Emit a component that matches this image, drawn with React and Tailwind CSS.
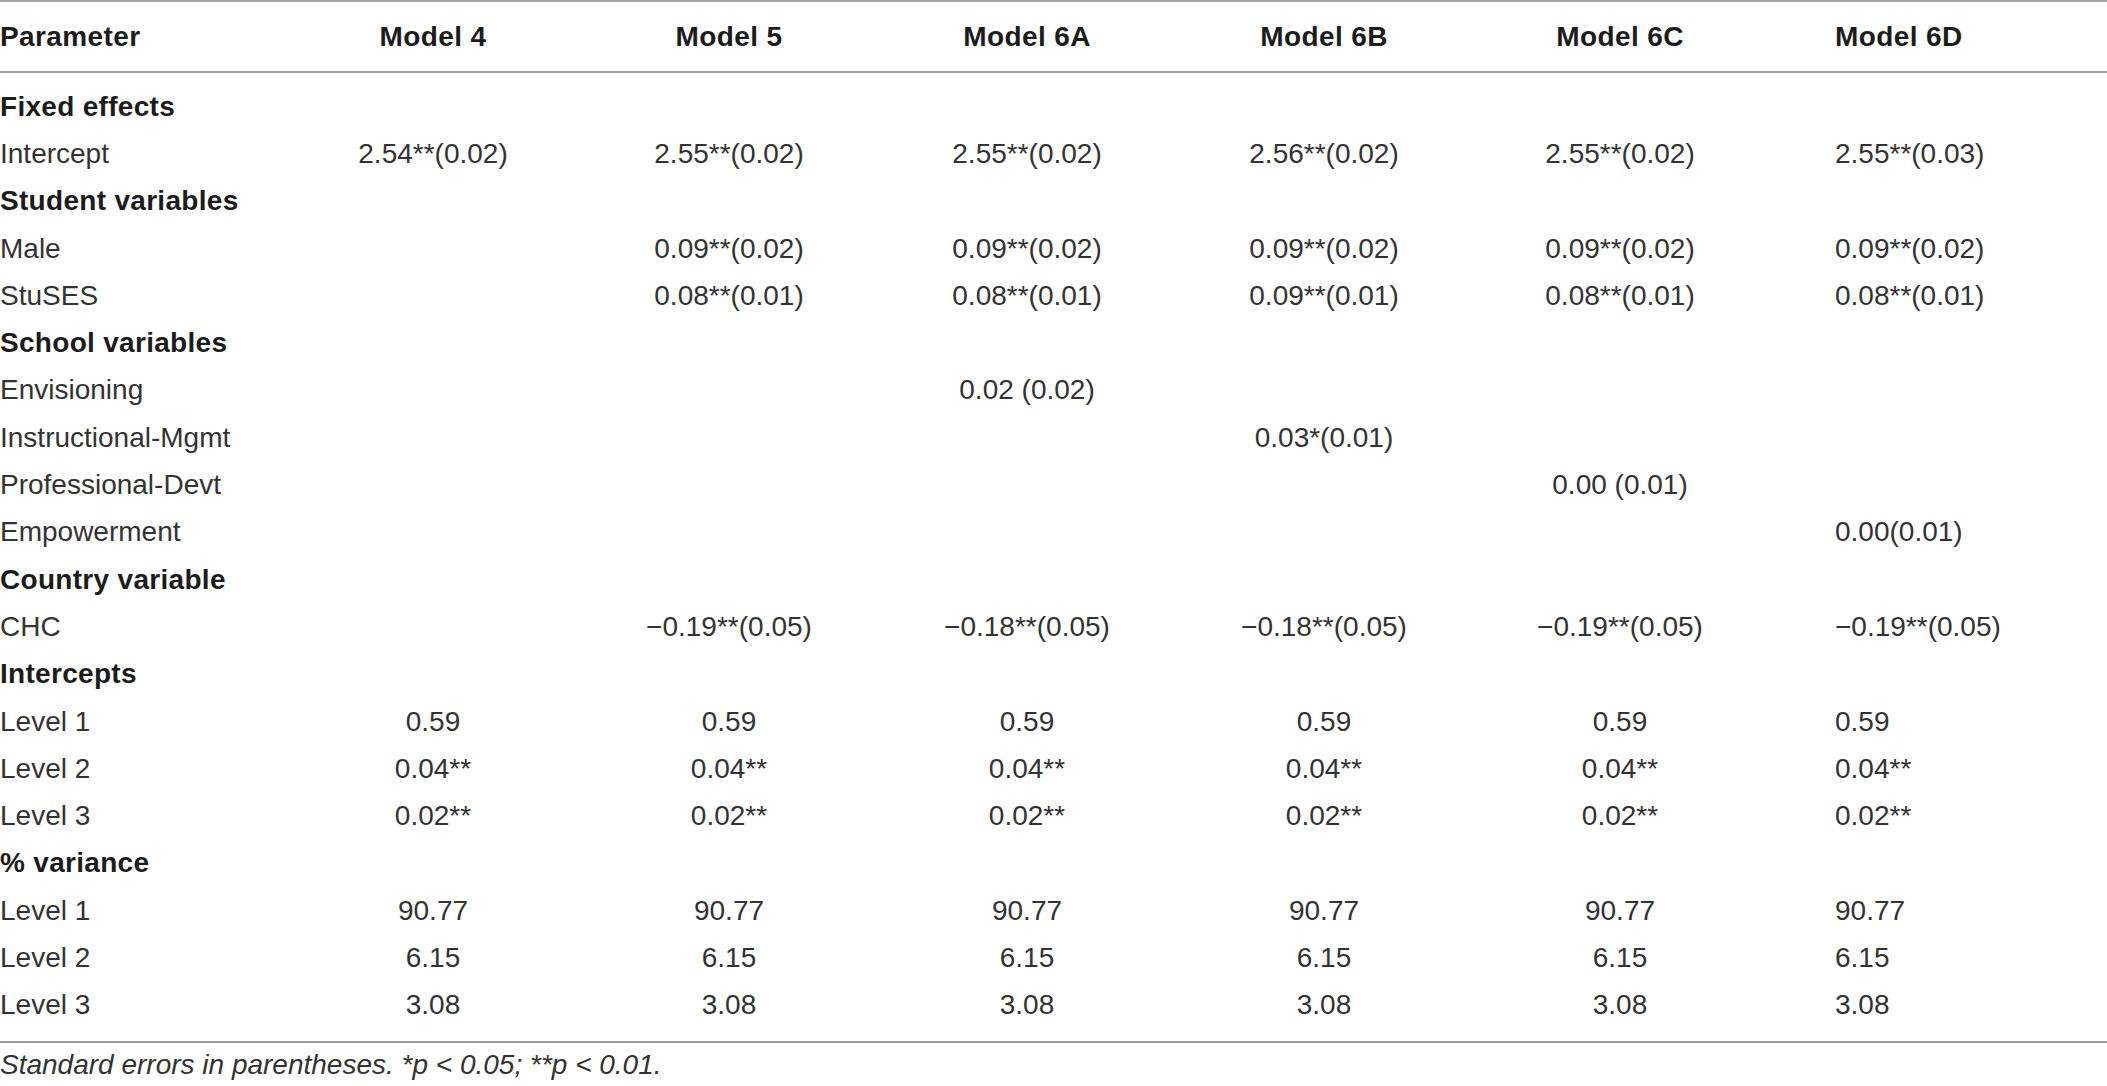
import React from 'react';

const MINUS = '\u2212';

// Rows of the table: section rows are bold, no values
const rows = [
  { section: 'Fixed effects' },
  { label: 'Intercept', values: ['2.54**(0.02)', '2.55**(0.02)', '2.55**(0.02)', '2.56**(0.02)', '2.55**(0.02)', '2.55**(0.03)'] },
  { section: 'Student variables' },
  { label: 'Male', values: ['', '0.09**(0.02)', '0.09**(0.02)', '0.09**(0.02)', '0.09**(0.02)', '0.09**(0.02)'] },
  { label: 'StuSES', values: ['', '0.08**(0.01)', '0.08**(0.01)', '0.09**(0.01)', '0.08**(0.01)', '0.08**(0.01)'] },
  { section: 'School variables' },
  { label: 'Envisioning', values: ['', '', '0.02 (0.02)', '', '', ''] },
  { label: 'Instructional-Mgmt', values: ['', '', '', '0.03*(0.01)', '', ''] },
  { label: 'Professional-Devt', values: ['', '', '', '', '0.00 (0.01)', ''] },
  { label: 'Empowerment', values: ['', '', '', '', '', '0.00(0.01)'] },
  { section: 'Country variable' },
  { label: 'CHC', values: ['', `${MINUS}0.19**(0.05)`, `${MINUS}0.18**(0.05)`, `${MINUS}0.18**(0.05)`, `${MINUS}0.19**(0.05)`, `${MINUS}0.19**(0.05)`] },
  { section: 'Intercepts' },
  { label: 'Level 1', values: Array(6).fill('0.59') },
  { label: 'Level 2', values: Array(6).fill('0.04**') },
  { label: 'Level 3', values: Array(6).fill('0.02**') },
  { section: '% variance' },
  { label: 'Level 1', values: Array(6).fill('90.77') },
  { label: 'Level 2', values: Array(6).fill('6.15') },
  { label: 'Level 3', values: Array(6).fill('3.08') },
];

const models = ['Model 4', 'Model 5', 'Model 6A', 'Model 6B', 'Model 6C', 'Model 6D'];

const gridCols = 'grid grid-cols-[300px_280px_298px_298px_296px_296px_1fr]';

// first model column sits a bit left, last one is left-aligned
const cellClass = (i) =>
  i === 5 ? 'pl-[67px]' : i === 0 ? 'text-center pr-[14px]' : 'text-center';

const App = () => {
  return (
    <div className="w-[2107px] h-[1086px] bg-white overflow-hidden font-['Liberation_Sans',Arial,sans-serif] text-[28px]">
      {/* HEADER */}
      <div className={`${gridCols} h-[73px] items-center border-t-2 border-b-2 border-[#a3a3a3] font-bold text-[#1c1c1c] tracking-[0.4px]`}>
        <div>Parameter</div>
        {models.map((m, i) => (
          <div key={m} className={cellClass(i)}>{m}</div>
        ))}
      </div>

      {/* BODY */}
      <div className="pt-[10px] pb-[12px] border-b-2 border-[#9c9c9c]">
        {rows.map((r, idx) =>
          r.section ? (
            <div key={idx} className="h-[47.3px] flex items-center font-bold text-[#1c1c1c] tracking-[0.3px]">
              {r.section}
            </div>
          ) : (
            <div key={idx} className={`${gridCols} h-[47.3px] items-center text-[#333333]`}>
              <div>{r.label}</div>
              {r.values.map((v, i) => (
                <div key={i} className={cellClass(i)}>{v}</div>
              ))}
            </div>
          )
        )}
      </div>

      {/* FOOTNOTE */}
      <div className="pt-[7px] leading-[30px] italic text-[#333333]">
        Standard errors in parentheses. *p &lt; 0.05; **p &lt; 0.01.
      </div>
    </div>
  );
};

export default App;
